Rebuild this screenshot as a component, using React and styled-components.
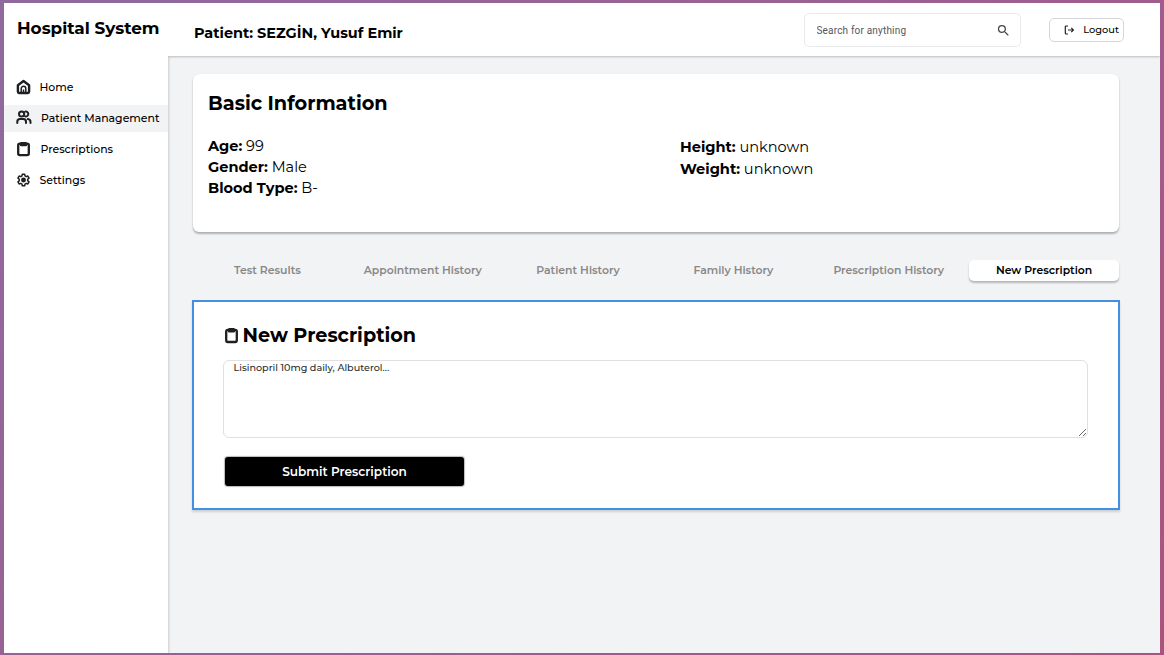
import React from "react";
import styled, { createGlobalStyle } from "styled-components";
import { MdSearch } from "react-icons/md";

const Global = createGlobalStyle`
  * { box-sizing: border-box; }
  body { margin: 0; color: #000; font-family: Montserrat, Inter, sans-serif; }
  h1, h2, p { margin: 0; }
  button, textarea, input { font-family: inherit; color: inherit; }
  svg { display: block; flex: none; }
`;

const Frame = styled.div`
  width: 100vw;
  height: 100vh;
  padding: 3px 4px 2px;
  overflow: hidden;
  background: linear-gradient(135deg, #8f6a9e 0%, #9c5f91 50%, #a9547f 100%);
`;

const Shell = styled.div`
  display: flex;
  flex-direction: column;
  height: 100%;
  background: #f2f3f5;
`;

const Header = styled.header`
  display: flex;
  align-items: flex-start;
  height: 53px;
  flex: none;
  background: #fff;
`;

const Brand = styled.h1`
  width: 164px;
  height: 53px;
  padding: 15px 0 0 13px;
  font-size: 16.85px;
  font-weight: 700;
  line-height: 20px;
  white-space: nowrap;
`;

const TopBar = styled.div`
  display: flex;
  flex: 1;
  align-items: flex-start;
  height: 53px;
  padding: 10px 36px 0 26px;
  background: #fff;
  box-shadow: 0 1px 2px rgba(0, 0, 0, 0.22);
  clip-path: inset(0 0 -4px 0);
`;

const PatientName = styled.h2`
  flex: 1;
  padding-top: 10px;
  font-size: 14.45px;
  font-weight: 700;
  line-height: 20px;
`;

const SearchBox = styled.label`
  display: flex;
  align-items: center;
  width: 217px;
  height: 34px;
  padding: 0 9px 0 12px;
  border: 1px solid #e8e9eb;
  border-radius: 5px;
  color: #45474d;
`;

const SearchInput = styled.input`
  flex: 1;
  min-width: 0;
  padding: 0;
  border: 0;
  outline: 0;
  background: none;
  font: 400 10px Roboto, sans-serif;
  letter-spacing: 0.18px;
  &::placeholder { color: #55575d; opacity: 1; }
`;

const LogoutButton = styled.button`
  display: flex;
  align-items: center;
  justify-content: flex-end;
  gap: 8px;
  width: 75px;
  height: 24px;
  margin: 4.5px 0 0 28.5px;
  padding: 0 4px 0 0;
  border: 1px solid #d6d6d8;
  border-radius: 5px;
  background: #fff;
  font-size: 9.8px;
  font-weight: 500;
`;

const Body = styled.div`
  display: flex;
  flex: 1;
  min-height: 0;
`;

const Sidebar = styled.nav`
  width: 164px;
  flex: none;
  padding-top: 18px;
  background: #fff;
  box-shadow: 1px 0 2px rgba(0, 0, 0, 0.16);
  clip-path: inset(0 -4px 0 0);
`;

const NavItem = styled.a`
  display: flex;
  align-items: center;
  gap: ${(p) => p.$gap || 9}px;
  height: 27px;
  margin-bottom: ${(p) => p.$after || 0}px;
  padding: 0 0 1px 12px;
  background: ${(p) => (p.$active ? "#f2f3f5" : "transparent")};
  font-size: 10.9px;
  font-weight: 500;
  white-space: nowrap;
`;

const Main = styled.main`
  flex: 1;
  min-width: 0;
  padding: 18px 40px 0 24px;
`;

const Card = styled.section`
  height: 158px;
  margin: 0 1px;
  padding: 18px 15px 0;
  border-radius: 6px;
  background: #fff;
  box-shadow: 0 2px 2px rgba(0, 0, 0, 0.27), 0 0 1px rgba(0, 0, 0, 0.15);
`;

const Title = styled.h2`
  display: flex;
  align-items: center;
  gap: 4px;
  height: 22px;
  font-size: 19.3px;
  font-weight: 700;
  line-height: 22px;
  white-space: nowrap;
`;

const Facts = styled.div`
  display: grid;
  grid-template-columns: 472px 1fr;
  padding-top: 22px;
`;

const FactList = styled.div`
  padding-top: ${(p) => p.$offset || 0}px;
  font-size: 14.55px;
  line-height: ${(p) => p.$pitch}px;
`;

const Tabs = styled.div`
  display: grid;
  grid-template-columns: repeat(6, 1fr);
  margin: 28px -2px 0;
`;

const Tab = styled.button`
  height: 21px;
  margin: 0 2.5px 0 2px;
  padding: 0 0 1px;
  border: 0;
  border-radius: 5px;
  background: ${(p) => (p.$active ? "#fff" : "transparent")};
  box-shadow: ${(p) => (p.$active ? "0 2px 2px rgba(0, 0, 0, 0.25)" : "none")};
  color: ${(p) => (p.$active ? "#000" : "#888")};
  font-size: 10.85px;
  font-weight: 600;
  white-space: nowrap;
`;

const Panel = styled.section`
  height: 210px;
  margin-top: 19px;
  padding: 22px 30px 0 29px;
  border: 2px solid #438fe3;
  background: #fff;
  box-shadow: 0 2px 2px rgba(0, 0, 0, 0.15);
`;

const PanelTitle = styled(Title)`
  gap: 3.5px;
  padding-left: 1px;
  font-size: 19.2px;
`;

const Note = styled.textarea`
  display: block;
  width: 865px;
  height: 78px;
  margin-top: 14px;
  padding: 0 9.5px;
  border: 1px solid #e0e0e2;
  border-radius: 6px;
  outline: 0;
  resize: vertical;
  font-size: 9.65px;
  font-weight: 500;
  line-height: 13px;
  &::placeholder { color: #2c2c2c; opacity: 1; }
`;

const Submit = styled.button`
  width: 239px;
  height: 29px;
  margin: 19px 0 0 2px;
  padding: 0;
  border: 0;
  border-radius: 3px;
  background: #000;
  box-shadow: 0 0 1px 1px rgba(0, 0, 0, 0.28);
  color: #fff;
  font-size: 12.1px;
  font-weight: 600;
`;

const HomeIcon = () => (
  <svg width="15" height="16" viewBox="0 0 15 16" fill="none" stroke="#1d1f21">
    <path d="M1.9 6.2 7.5 2l5.6 4.200v6.600q0 1.200-1.200 1.200H3.100q-1.200 0-1.200-1.200z" strokeWidth="2.400" strokeLinejoin="round" />
    <path d="M5.200 13.500V9.600a2.300 2.300 0 0 1 4.600 0v3.900M7.500 10.500v3" strokeWidth="1.500" />
  </svg>
);

const UsersIcon = () => (
  <svg width="16" height="15" viewBox="0 0 16 15" fill="none" stroke="#1d1f21" strokeWidth="2" strokeLinecap="round">
    <circle cx="5.600" cy="4" r="2.600" />
    <path d="M9.100 1.600a2.500 2.500 0 1 1 0 4.800" />
    <path d="M1.300 13v-1.200Q1.300 9.100 4 9.100h3.300q2.700 0 2.700 2.700V13M11.800 9.100q2.700.3 2.700 2.900V13" />
  </svg>
);

const ClipboardIcon = ({ width = 15, height = 16 }) => (
  <svg width={width} height={height} viewBox="0 0 15 16" preserveAspectRatio="none" fill="none" stroke="#1d1f21">
    <rect x="2.200" y="2.700" width="10.600" height="11.400" rx="1.600" strokeWidth="2.300" />
    <path d="M3.900 2.400q0-1.500 1.500-1.500h4.200q1.500 0 1.500 1.500v1.500q0 1.300-1.300 1.300H5.200q-1.300 0-1.300-1.300z" fill="#1d1f21" stroke="none" />
  </svg>
);

const GearIcon = () => (
  <svg width="15" height="14" viewBox="0 0 24 24" fill="none" stroke="#1d1f21" strokeWidth="2.600" strokeLinejoin="round">
    <path d="m10 2-.6 3-2 1.200-2.900-1-2 3.500 2.300 2.100v2.400l-2.300 2.100 2 3.500 2.900-1 2 1.200.6 3h4l.6-3 2-1.200 2.900 1 2-3.500-2.300-2.100v-2.400l2.300-2.100-2-3.500-2.900 1-2-1.200-.6-3z" />
    <circle cx="12" cy="12" r="2.200" strokeWidth="4" />
  </svg>
);

const LogoutIcon = () => (
  <svg width="11" height="10" viewBox="0 0 11 10" fill="none" stroke="#222" strokeWidth="1.200">
    <path d="M4 1H2.200Q1.300 1 1.300 1.900v6.200q0 .9.900.9H4M4 5h5.200M7.300 2.900 9.400 5 7.300 7.100" />
  </svg>
);

export default function App() {
  return (
    <>
      <Global />
      <Frame>
        <Shell>
          <Header>
            <Brand>Hospital System</Brand>
            <TopBar>
              <PatientName>Patient: SEZGİN, Yusuf Emir</PatientName>
              <SearchBox>
                <SearchInput placeholder="Search for anything" />
                <MdSearch size={15} />
              </SearchBox>
              <LogoutButton>
                <LogoutIcon />
                Logout
              </LogoutButton>
            </TopBar>
          </Header>
          <Body>
            <Sidebar>
              <NavItem $gap={8.500} $after={3.500}><HomeIcon />Home</NavItem>
              <NavItem $active $after={4}><UsersIcon />Patient Management</NavItem>
              <NavItem $gap={9.500} $after={4}><ClipboardIcon />Prescriptions</NavItem>
              <NavItem $gap={8.500}><GearIcon />Settings</NavItem>
            </Sidebar>
            <Main>
              <Card>
                <Title>Basic Information</Title>
                <Facts>
                  <FactList $pitch={21}>
                    <p><b>Age:</b> 99</p>
                    <p><b>Gender:</b> Male</p>
                    <p><b>Blood Type:</b> B-</p>
                  </FactList>
                  <FactList $pitch={21.5} $offset={1}>
                    <p><b>Height:</b> unknown</p>
                    <p><b>Weight:</b> unknown</p>
                  </FactList>
                </Facts>
              </Card>
              <Tabs>
                <Tab>Test Results</Tab>
                <Tab>Appointment History</Tab>
                <Tab>Patient History</Tab>
                <Tab>Family History</Tab>
                <Tab>Prescription History</Tab>
                <Tab $active>New Prescription</Tab>
              </Tabs>
              <Panel>
                <PanelTitle><ClipboardIcon width={15} height={17} />New Prescription</PanelTitle>
                <Note placeholder="Lisinopril 10mg daily, Albuterol..." />
                <Submit>Submit Prescription</Submit>
              </Panel>
            </Main>
          </Body>
        </Shell>
      </Frame>
    </>
  );
}
